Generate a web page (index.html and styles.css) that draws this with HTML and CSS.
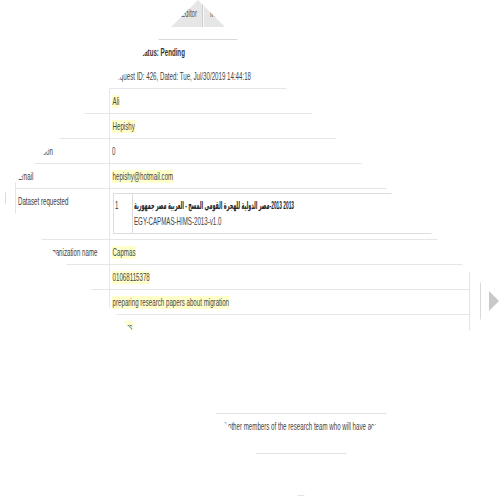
FILE: index.html
```html
<!DOCTYPE html>
<html>
<head>
<meta charset="utf-8">
<title>Request</title>
<link rel="stylesheet" href="styles.css">
</head>
<body>
<div class="frame">
  <div class="tabs">
    <div class="tab tab-first"><span class="sq">Editor</span></div>
    <div class="tab tab-next"><span class="sq">Info</span></div>
  </div>
  <div class="main">
    <div class="panel">
      <div class="hdr">
        <div class="status"><span class="sq">Request Status: Pending</span></div>
        <div class="reqid"><span class="sq">Request ID: 426, Dated: Tue, Jul/30/2019 14:44:18</span></div>
      </div>
      <div class="table">
        <div class="row"><div class="lbl"><span class="sq">First name</span></div><div class="val"><span class="sq hl">Ali</span></div></div>
        <div class="row"><div class="lbl"><span class="sq">Last name</span></div><div class="val"><span class="sq hl">Hepishy</span></div></div>
        <div class="row"><div class="lbl"><span class="sq">Organization</span></div><div class="val"><span class="sq">0</span></div></div>
        <div class="row"><div class="lbl"><span class="sq">Email</span></div><div class="val"><span class="sq hl">hepishy@hotmail.com</span></div></div>
        <div class="row"><div class="lbl"><span class="sq">Dataset requested</span></div>
          <div class="val ds">
            <div class="box">
              <div class="num"><span class="sq">1</span></div>
              <div class="dtext">
                <div class="ar"><div class="sq-ar"><span>جمهورية</span><span>مصر</span><span>العربية</span><span>-</span><span>المسح</span><span>القومى</span><span>للهجرة</span><span>الدولية</span><span>مصر</span><span class="tight">-2013</span><span>2013</span></div></div>
                <div class="egy"><span class="sq">EGY-CAPMAS-HIMS-2013-v1.0</span></div>
              </div>
            </div>
          </div>
        </div>
        <div class="row"><div class="lbl"><span class="sq">Receiving organization name</span></div><div class="val"><span class="sq hl">Capmas</span></div></div>
        <div class="row"><div class="lbl"><span class="sq">Telephone</span></div><div class="val"><span class="sq hl">01068115378</span></div></div>
        <div class="row"><div class="lbl"><span class="sq">Intended use of the data</span></div><div class="val"><span class="sq hl">preparing research papers about migration</span></div></div>
        <div class="row"><div class="lbl"><span class="sq">Expected output</span></div><div class="val"><span class="sq hl">Papers</span></div></div>
      </div>
      <div class="notes"><span class="sq">Please list the names and affiliations of all other members of the research team who will have access to the data</span></div>
      <div class="foot"></div>
    </div>
    <div class="side"></div>
  </div>
</div>
</body>
</html>
```

FILE: styles.css
```css
body {
  margin: 0;
  font-family: "Liberation Sans", Arial, sans-serif;
  font-size: 11px;
  color: #444;
  background: #fff;
}

.frame {
  width: 500px;
  height: 500px;
  overflow: hidden;
  background: #fff;
  clip-path: polygon(198px 0, 499px 301px, 301px 499px, 0 198px);
}

.sq {
  display: inline-block;
  white-space: nowrap;
  transform: scaleX(0.56);
  transform-origin: 0 50%;
}

.sq-ar {
  display: flex;
  gap: 3px;
  white-space: nowrap;
  width: max-content;
  transform: scaleX(0.44);
  transform-origin: 0 50%;
}

.sq-ar .tight {
  margin-left: -3px;
}

.tabs {
  height: 27px;
  box-sizing: border-box;
  background: #e6e6e6;
  display: flex;
  padding-left: 169px;
}

.tab {
  line-height: 27px;
  color: #555;
}

.tab-first {
  width: 34px;
  box-sizing: border-box;
  padding-left: 12px;
  border-right: 1px solid #cfcfcf;
}

.tab-next {
  border-left: 1px solid #f7f7f7;
  padding-left: 6px;
}

.main {
  display: flex;
  margin-top: 12px;
}

.panel {
  margin-left: 5px;
  width: 476px;
  flex: none;
  box-sizing: border-box;
  border: 1px solid #d9d9d9;
  border-bottom: none;
  padding: 0 10px 0 9px;
}

.side {
  margin-left: 8px;
  flex: 1;
  background: #c8c8c8;
}

.hdr {
  padding: 6px 0 0 97px;
  margin-bottom: 5px;
}

.status {
  font-weight: bold;
  line-height: 13px;
  color: #333;
}

.reqid {
  margin-top: 11px;
  line-height: 13px;
  color: #444;
}

.table {
  border-left: 1px solid #e3e3e3;
  border-right: 1px solid #e3e3e3;
}

.row {
  display: grid;
  grid-template-columns: 94px 1fr;
  border-top: 1px solid #e6e6e6;
}

.lbl {
  box-sizing: border-box;
  border-right: 1px solid #e6e6e6;
  padding: 6px 0 5px 2px;
  line-height: 13px;
  color: #3a3a3a;
}

.val {
  padding: 6px 0 5px 2px;
  line-height: 13px;
  color: #444;
}

.hl {
  background: #ffffcc;
  padding: 0 1px;
}

.val.ds {
  padding: 4px 4px 5px 3px;
}

.box {
  border: 1px solid #dddddd;
  display: grid;
  grid-template-columns: 19px 1fr;
}

.num {
  box-sizing: border-box;
  border-right: 1px solid #dddddd;
  padding: 4px 0 0 1px;
  line-height: 14px;
  color: #333;
}

.dtext {
  padding: 4px 0 5px 1px;
}

.ar {
  line-height: 14px;
  font-weight: bold;
  color: #222;
  font-family: "Liberation Sans", "DejaVu Sans", "Noto Sans", sans-serif;
}

.egy {
  margin-top: 2px;
  line-height: 14px;
  color: #444;
}

.notes {
  margin-top: 74px;
  border-top: 1px solid #e3e3e3;
  border-bottom: 1px solid #e3e3e3;
  padding: 6px 0 20px 97px;
  line-height: 13px;
  color: #444;
}

.foot {
  margin-top: 41px;
  border-top: 1px solid #e3e3e3;
  height: 10px;
}
```
